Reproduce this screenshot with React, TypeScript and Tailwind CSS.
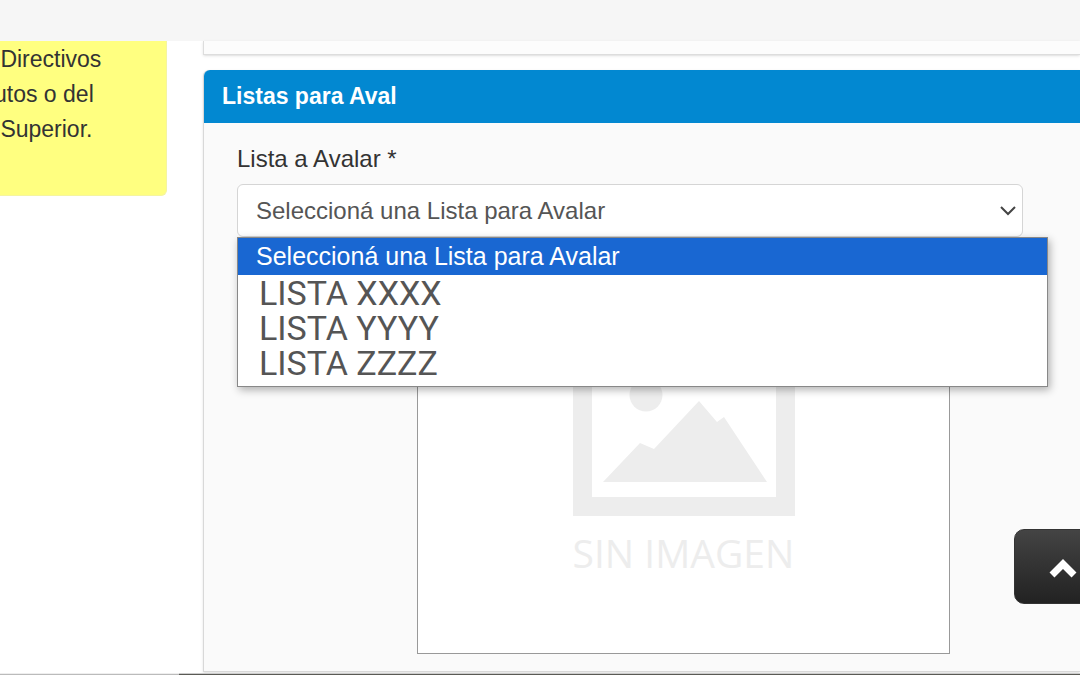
import { useState } from "react";

const listas = ["LISTA XXXX", "LISTA YYYY", "LISTA ZZZZ"];
const placeholder = "Seleccioná una Lista para Avalar";

function SinImagen() {
  return (
    <figure className="mt-8 ml-[180px] mr-[73px] h-[385px] border border-[#999] bg-white pt-[76px] flex flex-col items-center text-[#ededed]">
      <svg width="222" height="170" viewBox="0 0 222 170" fill="currentColor" aria-hidden="true">
        <path fillRule="evenodd" d="M0 0h222v170H0zM19 19v132h184V19z" />
        <circle cx="73" cy="49" r="16.5" />
        <path d="M30 136L67 97L81 103L126 55L144 76L151 71L194 136Z" />
      </svg>
      <figcaption className="mt-3 font-['Open_Sans',sans-serif] text-[39px] leading-[50px] whitespace-nowrap">
        SIN IMAGEN
      </figcaption>
    </figure>
  );
}

export default function App() {
  const [lista, setLista] = useState("");
  const [open, setOpen] = useState(true);

  const elegir = (value: string) => {
    setLista(value);
    setOpen(false);
  };

  return (
    <div className="overflow-hidden bg-white font-['Liberation_Sans',Arial,sans-serif] text-[#333]">
      <header className="h-[41px] bg-[#f6f6f6]" />

      <div className="flex items-start">
        <aside className="w-[167px] shrink-0 h-[155px] overflow-hidden rounded-br-md bg-[#ffff80] border-b border-r border-[#f5f5a0]">
          <p className="-ml-1.5 pt-px whitespace-pre text-[23px] leading-[35px]">
            {" Directivos\nutos o del\n Superior."}
          </p>
        </aside>

        <main className="ml-9 flex-1 min-w-0">
          <div className="h-[14px] border-l border-b border-[#ddd] bg-[#fcfcfc] shadow-sm" />

          {/* Panel de avales */}
          <section className="mt-[15px] h-[602px] rounded-tl-md border-l border-b border-[#d8d8d8] bg-[#fafafa] shadow-sm">
            <h2 className="h-[53px] rounded-tl-md bg-[#0288d1] pl-[18px] text-[23px] leading-[52px] font-bold text-white">
              Listas para Aval
            </h2>

            <div className="pl-[33px] pr-[57px] pt-[21px]">
              <label htmlFor="lista" className="block text-2xl leading-[30px]">
                Lista a Avalar *
              </label>

              <div className="relative mt-[10px]">
                <select
                  id="lista"
                  value={lista}
                  onChange={(e) => elegir(e.target.value)}
                  className="block h-[53px] w-full appearance-none rounded-md border border-[#d5d5d5] bg-white pl-[18px] pr-10 text-2xl text-[#555]"
                >
                  <option value="">{placeholder}</option>
                  {listas.map((l) => (
                    <option key={l} value={l}>
                      {l}
                    </option>
                  ))}
                </select>
                <svg
                  className="pointer-events-none absolute right-[7px] top-[21px]"
                  width="16"
                  height="12"
                  viewBox="0 0 16 12"
                  fill="none"
                  stroke="#444"
                  strokeWidth="2"
                  aria-hidden="true"
                >
                  <path d="M1 2L8 9L15 2" />
                </svg>

                {open && (
                  <div className="absolute left-0 -right-[25px] top-[53px] z-10 border border-[#888] bg-white pb-[5px] shadow-[2px_3px_8px_rgba(0,0,0,0.3)]">
                    <button
                      onClick={() => elegir("")}
                      className="mb-px block h-[37px] w-full bg-[#1967d2] pl-[18px] text-left text-[25px] leading-[37px] text-white"
                    >
                      {placeholder}
                    </button>
                    {listas.map((l) => (
                      <button
                        key={l}
                        onClick={() => elegir(l)}
                        className="block h-[35px] w-full pl-[21px] text-left font-[Roboto,sans-serif] text-[34px] leading-[35px] text-[#555]"
                      >
                        {l}
                      </button>
                    ))}
                  </div>
                )}
              </div>

              <SinImagen />
            </div>
          </section>
        </main>
      </div>

      <footer className="mt-px flex h-[2px]">
        <div className="w-[179px] border-t border-[#eee] bg-[#bbb]" />
        <div className="flex-1 border-t border-[#ccc] bg-[#5a5a55]" />
      </footer>

      <button
        aria-label="Volver arriba"
        onClick={() => window.scrollTo({ top: 0 })}
        className="fixed bottom-[71px] -right-8 flex h-[75px] w-[98px] items-center justify-center rounded-[10px] border border-[#333] bg-linear-to-b from-[#444] to-[#222]"
      >
        <svg className="mt-1" width="30" height="22" viewBox="0 0 30 22" aria-hidden="true">
          <path
            d="M4 17L15 6L26 17"
            fill="none"
            stroke="#fff"
            strokeWidth="7"
          />
        </svg>
      </button>
    </div>
  );
}
